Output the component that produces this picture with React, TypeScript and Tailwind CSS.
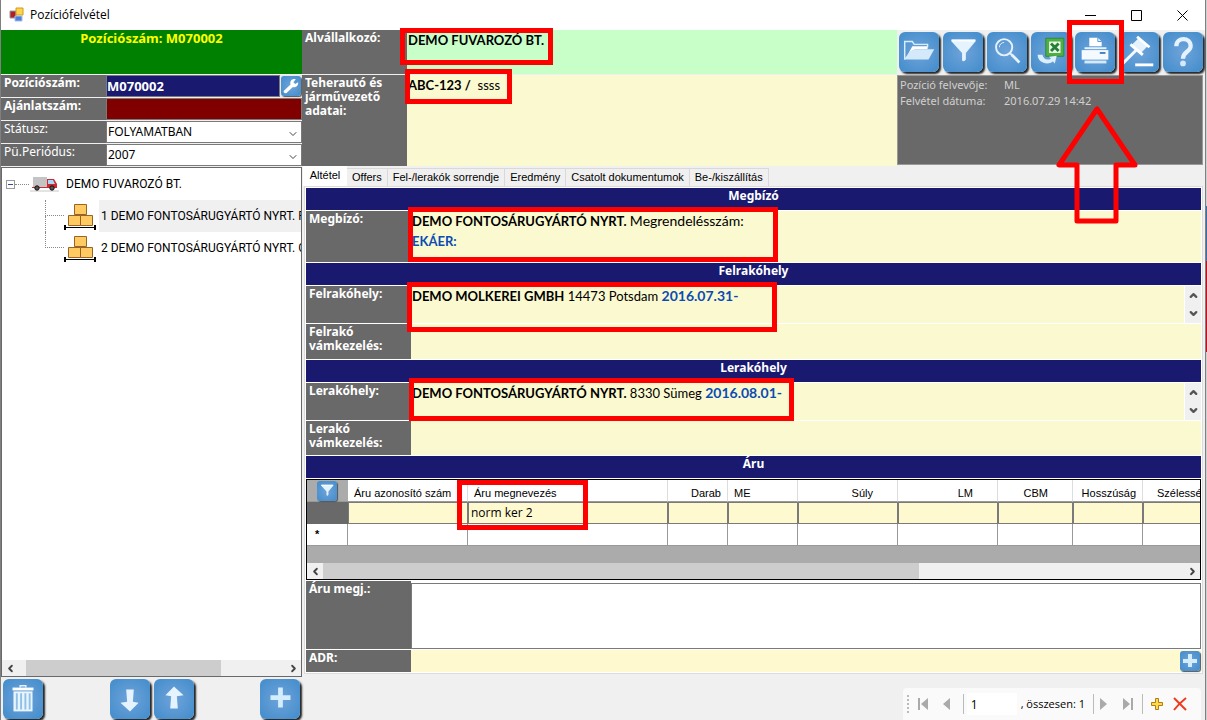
import React from "react";
import clsx from "clsx";
import { ChevronDown, ChevronLeft, ChevronRight, ChevronUp } from "lucide-react";

const tabs = ["Offers", "Fel-/lerakók sorrendje", "Eredmény", "Csatolt dokumentumok", "Be-/kiszállítás"];

const columns = [
  { label: "Áru azonosító szám", width: "w-[120px]", align: "text-left pl-1.5" },
  { label: "Áru megnevezés", width: "w-[200px]", align: "text-left pl-1.5" },
  { label: "Darab", width: "w-[60px]", align: "text-right pr-1.5" },
  { label: "ME", width: "w-[70px]", align: "text-left pl-1.5" },
  { label: "Súly", width: "w-[100px]", align: "text-right pr-6" },
  { label: "LM", width: "w-[100px]", align: "text-right pr-6" },
  { label: "CBM", width: "w-[75px]", align: "text-right pr-6" },
  { label: "Hosszúság", width: "w-[70px]", align: "text-right pr-1.5" },
  { label: "Szélessé", width: "", align: "text-left pl-3.5" },
];

const treeItems = ["1 DEMO FONTOSÁRUGYÁRTÓ NYRT. F", "2 DEMO FONTOSÁRUGYÁRTÓ NYRT. G"];

type IconProps = { className?: string };

const FolderIcon = ({ className }: IconProps) => (
  <svg viewBox="0 0 42 42" className={className}>
    <path d="M6 29V10h8l2 3h14v3" fill="none" stroke="#d9edfb" strokeWidth="1.5" />
    <path d="M8 26 14 15h16v3H17l-4 2z" fill="#fff" />
    <path d="M5 29 12 20l5-2h20l-6 11z" fill="#d4e9f9" />
  </svg>
);

const FunnelIcon = ({ className }: IconProps) => (
  <svg viewBox="0 0 42 42" className={className}>
    <path d="M9 8h25v2L24 22v7q-2 3-4 1v-8L9 10z" fill="#e4f3fd" />
    <path d="M9 8h25v2H9z" fill="#fff" />
  </svg>
);

const SearchIcon = ({ className }: IconProps) => (
  <svg viewBox="0 0 42 42" className={className} fill="none" stroke="#e4f3fd">
    <circle cx="18" cy="16" r="8.5" strokeWidth="2" />
    <path d="M13 16a5 5 0 0 1 5-5" strokeWidth="1" />
    <path d="m24 22 3 3" strokeWidth="2" />
    <path d="m26 24 8 8" strokeWidth="3" />
  </svg>
);

const ExcelIcon = ({ className }: IconProps) => (
  <svg viewBox="0 0 42 42" className={className}>
    <path d="M15.500 6.500h19v19h-19z" fill="#4fae45" stroke="#2c8a35" />
    <path d="M19 10h12v12H19z" fill="#eef6e4" />
    <path d="m21 12 8 8m0-8-8 8" stroke="#23803a" strokeWidth="3" />
    <path d="M7 24c0 9 11 11 16 7l2 2 2-8-8 1 2 2c-4 2-8 1-9-4z" fill="#dceffc" />
  </svg>
);

const PrinterIcon = ({ className }: IconProps) => (
  <svg viewBox="0 0 42 42" className={className}>
    <path d="M15 6h9l4 4v5H15z" fill="#fff" />
    <path d="M24 6v4h4" fill="none" stroke="#4a90cf" />
    <path d="M10 16h23v2H10z" fill="#e4f3fd" />
    <path d="M7 19h28v10H7z" fill="#f4faff" />
    <path d="M26 21h6v2h-6z" fill="#3f81c4" />
    <path d="M10 30h23v3H10z" fill="#d4e9f9" />
  </svg>
);

const GavelIcon = ({ className }: IconProps) => (
  <svg viewBox="0 0 42 42" className={className}>
    <path d="M19 18 3 34" stroke="#f4faff" strokeWidth="3" />
    <path d="m20 7 10 8-7 7-10-8z" fill="#e4f3fd" />
    <path d="m19 5 13 11M12 13l13 11" stroke="#fff" strokeWidth="3" />
    <path d="M17 33h19v3H17z" fill="#fff" />
  </svg>
);

const HelpIcon = ({ className }: IconProps) => (
  <svg viewBox="0 0 42 42" className={className}>
    <path d="M14 15c0-10 15-10 15 0 0 6-8 5-8 13" fill="none" stroke="#e4f3fd" strokeWidth="4.5" />
    <circle cx="21" cy="33" r="3" fill="#d4e9f9" />
  </svg>
);

const TrashIcon = ({ className }: IconProps) => (
  <svg viewBox="0 0 42 42" className={className}>
    <path d="M18 9V7h6v2" fill="none" stroke="#e4f3fd" strokeWidth="1.5" />
    <path d="M10 9h22v3H10z" fill="#fff" />
    <path d="M11 13h20v21H11z" fill="#e9f5fe" />
    <path d="M14.500 15v17M19 15v17M23.500 15v17M28 15v17" stroke="#8fc0e8" strokeWidth="2" />
  </svg>
);

const ArrowIcon = ({ className }: IconProps) => (
  <svg viewBox="0 0 42 42" className={className}>
    <path d="M17 31h8l-1-13 7-1-10-9-9 9 6 1z" fill="#e4f3fd" />
  </svg>
);

const PlusIcon = ({ className }: IconProps) => (
  <svg viewBox="0 0 42 42" className={className}>
    <path d="M19 9h5v8h8v5h-8v8h-5v-8h-8v-5h8z" fill="#d4edfc" />
  </svg>
);

const SmallPlusIcon = ({ className }: IconProps) => (
  <svg viewBox="0 0 20 20" className={className}>
    <path d="M8 3h4v5h5v4h-5v4H8v-4H3V8h5z" fill="#d4edfc" />
  </svg>
);

const WrenchIcon = ({ className }: IconProps) => (
  <svg viewBox="0 0 42 42" className={className}>
    <path d="m6 31 14-13c-2-8 4-13 11-11l-5 6 4 4 6-4c1 7-5 12-11 10L11 36c-3 1-7-2-5-5z" fill="#fff" />
  </svg>
);

const TruckIcon = ({ className }: IconProps) => (
  <svg viewBox="0 0 30 16" className={className}>
    <path d="M0 15h29" stroke="#c8c8c8" />
    <path d="M3 1h14v10H3z" fill="#c4c4c4" />
    <path d="M17 3h7l3 5v4H2v-1h15z" fill="#cf2a33" />
    <path d="M18 4h5l2 4h-7z" fill="#a9d8f2" />
    <circle cx="7" cy="12" r="2.2" fill="#555" stroke="#111" />
    <circle cx="22" cy="12" r="2.2" fill="#555" stroke="#111" />
  </svg>
);

const BoxesIcon = ({ className }: IconProps) => (
  <svg viewBox="0 0 32 27" className={className}>
    <path
      d="M10.500 1.500h12v10h-12zM4.500 12.500h12v10h-12zM16.500 12.500h12v10h-12z"
      fill="#fdcb62"
      stroke="#9a6326"
    />
    <path d="M0 22h2v2h28v-2h2v5h-2v-2H2v2H0z" fill="#000" />
  </svg>
);

const toolbar = [
  { label: "Megnyitás", icon: FolderIcon },
  { label: "Szűrés", icon: FunnelIcon },
  { label: "Keresés", icon: SearchIcon },
  { label: "Excel export", icon: ExcelIcon },
  { label: "Nyomtatás", icon: PrinterIcon },
  { label: "Lezárás", icon: GavelIcon },
  { label: "Súgó", icon: HelpIcon },
];

type IconButtonProps = { label: string; icon: React.FC<IconProps>; small?: boolean; flip?: boolean };

const IconButton = ({ label, icon: Icon, small, flip }: IconButtonProps) => (
  <button
    aria-label={label}
    className={clsx(
      "shrink-0 bg-radial from-[#6fa3da] to-[#3f8ccb]",
      small
        ? "size-5 rounded-[3px] shadow-[1px_1px_1px_#555]"
        : "size-10 rounded-md shadow-[2px_2px_2px_#222]"
    )}
  >
    <Icon className={clsx("size-full", flip && "rotate-180")} />
  </button>
);

const SectionTitle = ({ children }: { children: React.ReactNode }) => (
  <h2 className="mb-px h-[22px] bg-[#191970] text-center text-[12px] leading-4 font-bold text-white">{children}</h2>
);

type FieldProps = { label: string; height: string; scroll?: boolean; children?: React.ReactNode };

const Field = ({ label, height, scroll, children }: FieldProps) => (
  <div className={clsx("mb-px flex", height)}>
    <div className="w-[105px] shrink-0 bg-[#696969] px-[3px] pt-px text-[12px] leading-[14px] font-bold text-white">
      {label}
    </div>
    <div className="flex-1 bg-[#fbf9cf] px-px font-['Lato',sans-serif] text-[13px] leading-5">{children}</div>
    {scroll && (
      <div className="ml-px flex w-4 flex-col items-center justify-between bg-[#f0f0f0] py-1 text-[#555]">
        <button aria-label="Fel"><ChevronUp size={11} strokeWidth={5} /></button>
        <button aria-label="Le"><ChevronDown size={11} strokeWidth={5} /></button>
      </div>
    )}
  </div>
);

type SelectRowProps = { id: string; label: string; value: string };

const SelectRow = ({ id, label, value }: SelectRowProps) => (
  <div className="mb-px flex h-[22px]">
    <label htmlFor={id} className="w-[105px] bg-[#696969] pl-[3px] text-[12px] leading-4 text-white">
      {label}
    </label>
    <div className="relative flex-1 border border-[#7a7a7a] bg-white">
      <select id={id} className="block h-full w-full appearance-none pl-px text-[12px] leading-5">
        <option>{value}</option>
      </select>
      <ChevronDown size={12} strokeWidth={2} className="pointer-events-none absolute top-1.5 right-0.5 text-[#444]" />
    </div>
  </div>
);

const HScroll = ({ thumb }: { thumb: string }) => (
  <div className="flex h-4 items-center bg-[#f0f0f0] text-[#444]">
    <button aria-label="Balra" className="flex w-4 justify-center"><ChevronLeft size={11} strokeWidth={4} /></button>
    <div className="h-full flex-1"><div className={clsx("h-full bg-[#cdcdcd]", thumb)} /></div>
    <button aria-label="Jobbra" className="flex w-4 justify-center"><ChevronRight size={11} strokeWidth={4} /></button>
  </div>
);

const Highlight = ({ className }: { className: string }) => (
  <div className={clsx("pointer-events-none absolute border-5 border-[#f00]", className)} />
);

const TitleBar = () => (
  <header className="flex h-[30px] items-center bg-white pl-2">
    <svg viewBox="0 0 16 16" className="mr-[5px] size-4">
      <path d="M1 4h6v7H1z" fill="#b32020" stroke="#8d9bb0" />
      <path d="M7 1h7v7H7z" fill="#ffd34d" stroke="#d39a17" />
      <path d="M6 9h7v5H6z" fill="#4f7fd9" stroke="#a8bee8" />
    </svg>
    <h1 className="flex-1 font-['Open_Sans',sans-serif] text-[12px]">Pozíciófelvétel</h1>
    <div className="flex items-center gap-[35px] pr-[17px]">
      <button aria-label="Kis méret"><svg viewBox="0 0 11 11" className="size-[11px]"><path d="M0 5.500h11" stroke="#000" /></svg></button>
      <button aria-label="Teljes méret"><svg viewBox="0 0 11 11" className="size-[11px]"><path d="M.5.5h10v10H.5z" fill="none" stroke="#000" /></svg></button>
      <button aria-label="Bezárás"><svg viewBox="0 0 11 11" className="size-[11px]"><path d="m.5.5 10 10m0-10-10 10" stroke="#000" /></svg></button>
    </div>
  </header>
);

const LeftPanel = () => (
  <aside className="flex w-[301px] shrink-0 flex-col">
    <div className="mb-px h-11 bg-[#008000] text-center text-[13px] leading-4 font-bold text-[#ff0]">
      Pozíciószám: M070002
    </div>
    <div className="mb-px flex h-[22px] bg-[#696969]">
      <label htmlFor="position" className="w-[105px] pl-[3px] text-[12px] leading-4 font-bold text-white">Pozíciószám:</label>
      <input
        id="position"
        readOnly
        value="M070002"
        className="min-w-0 flex-1 border border-[#7a7a7a] bg-[#191970] text-[13px] leading-5 font-bold text-white"
      />
      <div className="bg-[#e8e8e8] p-px"><IconButton label="Beállítás" icon={WrenchIcon} small /></div>
    </div>
    <div className="mb-px flex h-[22px] bg-[#696969]">
      <label htmlFor="offer" className="w-[105px] pl-[3px] text-[12px] leading-4 font-bold text-white">Ajánlatszám:</label>
      <input id="offer" readOnly className="min-w-0 flex-1 border border-[#7a7a7a] bg-[#800000] text-white" />
    </div>
    <SelectRow id="status" label="Státusz:" value="FOLYAMATBAN" />
    <SelectRow id="period" label="Pü.Periódus:" value="2007" />
    <div className="flex flex-1 flex-col border border-[#696969] bg-white font-['Roboto',sans-serif] text-[12px]">
      <ul className="flex-1 overflow-hidden">
        <li>
          <div className="flex h-8 items-center pl-1">
            <button aria-label="Összecsukás" className="flex size-[9px] items-center justify-center border border-[#999]">
              <span className="h-px w-[5px] bg-[#2b4ba0]" />
            </button>
            <span className="w-[14px] border-t border-dotted border-[#888]" />
            <TruckIcon className="mx-px h-4 w-[30px]" />
            <span className="ml-[5px]">DEMO FUVAROZÓ BT.</span>
          </div>
          <ul className="pl-[43px]">
            {treeItems.map((item, i) => (
              <li key={item} className="flex h-8 items-center">
                <span className="h-full w-[19px] shrink-0">
                  <span className="block h-4 border-b border-l border-dotted border-[#888]" />
                  {i === 0 && <span className="block h-4 border-l border-dotted border-[#888]" />}
                </span>
                <BoxesIcon className="h-[27px] w-8 shrink-0" />
                <span className={clsx("ml-[3px] h-8 flex-1 pl-0.5 leading-8 whitespace-nowrap", i === 0 && "bg-[#f0f0f0]")}>
                  {item}
                </span>
              </li>
            ))}
          </ul>
        </li>
      </ul>
      <HScroll thumb="ml-2 w-[195px]" />
    </div>
    <div className="flex h-[43px] gap-1 pt-0.5 pl-0.5">
      <IconButton label="Törlés" icon={TrashIcon} />
      <div className="flex flex-1 justify-center gap-1">
        <IconButton label="Le" icon={ArrowIcon} flip />
        <IconButton label="Fel" icon={ArrowIcon} />
      </div>
      <div className="pr-0.5"><IconButton label="Hozzáadás" icon={PlusIcon} /></div>
    </div>
  </aside>
);

const TopPanel = () => (
  <div className="flex">
    <div className="w-[595px]">
      <div className="mb-px flex h-11">
        <div className="w-[105px] bg-[#696969] pl-[3px] text-[12px] leading-4 font-bold text-white">Alvállalkozó:</div>
        <div className="flex-1 bg-[#c8ffc8] px-px font-['Lato',sans-serif] text-[13px] leading-5 font-bold">DEMO FUVAROZÓ BT.</div>
      </div>
      <div className="flex h-[91px]">
        <div className="w-[105px] bg-[#696969] px-[3px] pt-px text-[12px] leading-[14px] font-bold text-white">
          Teherautó és járművezető adatai:
        </div>
        <div className="flex-1 bg-[#fbf9cf] px-px font-['Lato',sans-serif] text-[13px] leading-5">
          <b>ABC-123 /</b>&nbsp; ssss
        </div>
      </div>
    </div>
    <div className="flex flex-1 flex-col">
      <div className="flex h-[45px] gap-1 pt-0.5 pl-0.5">
        {toolbar.map((item) => (
          <IconButton key={item.label} label={item.label} icon={item.icon} />
        ))}
      </div>
      <dl className="mr-0.5 mb-px grid flex-1 grid-cols-[104px_1fr] content-start border border-[#999] bg-[#696969] pt-px pl-0.5 text-[11px] leading-4 text-[#d0d0d0]">
        <dt>Pozíció felvevője:</dt>
        <dd>ML</dd>
        <dt>Felvétel dátuma:</dt>
        <dd>2016.07.29 14:42</dd>
      </dl>
    </div>
  </div>
);

const GoodsGrid = () => (
  <div className="mb-px overflow-hidden border border-black bg-[#ababab]">
    <table className="w-full table-fixed border-separate border-spacing-0 font-['Liberation_Sans',sans-serif] text-[11px]">
      <thead>
        <tr className="h-[22px]">
          <th className="w-[41px] border-b border-[#999] bg-[#ababab] p-0">
            <div className="flex justify-center pr-px"><IconButton label="Szűrés" icon={FunnelIcon} small /></div>
          </th>
          {columns.map((col) => (
            <th
              key={col.label}
              className={clsx(
                "border-r border-b border-r-[#ddd] border-b-[#999] bg-white pt-1 pb-0 leading-4 font-normal whitespace-nowrap last:border-r-0",
                col.width,
                col.align
              )}
            >
              {col.label}
            </th>
          ))}
        </tr>
      </thead>
      <tbody>
        <tr className="h-[22px]">
          <td className="bg-[#696969] p-0" />
          {columns.map((col, i) => (
            <td
              key={col.label}
              className="border border-[#7a7a7a] bg-[#fff9cf] px-0.5 py-0 font-['Open_Sans',sans-serif] text-[12px] leading-5 last:border-r-0"
            >
              {i === 1 && "norm ker 2"}
            </td>
          ))}
        </tr>
        <tr className="h-[22px]">
          <td className="border-r border-b border-[#999] bg-white px-2 py-0 font-bold">*</td>
          {columns.map((col) => (
            <td key={col.label} className="border-r border-b border-[#999] bg-white p-0 last:border-r-0" />
          ))}
        </tr>
      </tbody>
    </table>
    <div className="h-[17px]" />
    <HScroll thumb="w-[596px] max-w-full" />
  </div>
);

const Pager = () => (
  <nav className="mr-1 flex h-8 items-center rounded-t bg-[#fafafa] pl-1 font-['Open_Sans',sans-serif] text-[12px] text-[#aaa]">
    <span className="mr-2 h-[18px] border-l-2 border-dotted border-[#bbb]" />
    <button aria-label="Első" className="mr-3"><svg viewBox="0 0 12 12" className="size-3"><path d="M1 0h2v12H1zM11 0v12L4 6z" fill="currentColor" /></svg></button>
    <button aria-label="Előző" className="mr-2.5"><svg viewBox="0 0 12 12" className="size-3"><path d="M9 0v12L2 6z" fill="currentColor" /></svg></button>
    <span className="mr-[3px] h-5 w-px bg-[#bbb]" />
    <input aria-label="Oldal" defaultValue="1" className="h-[22px] w-[50px] bg-white px-1 text-[12px] text-black" />
    <span className="mr-2 ml-1 text-[11px] text-black">, összesen: 1</span>
    <span className="mr-1 h-5 w-px bg-[#bbb]" />
    <button aria-label="Következő" className="mr-3"><svg viewBox="0 0 12 12" className="size-3"><path d="M2 0v12l7-6z" fill="currentColor" /></svg></button>
    <button aria-label="Utolsó" className="mr-2"><svg viewBox="0 0 12 12" className="size-3"><path d="M1 0v12l7-6zM9 0h2v12H9z" fill="currentColor" /></svg></button>
    <span className="mr-2 h-5 w-px bg-[#bbb]" />
    <button aria-label="Új" className="mr-2.5"><svg viewBox="0 0 12 12" className="size-3"><path d="M4.500.5h3v4h4v3h-4v4h-3v-4h-4v-3h4z" fill="#ffd84d" stroke="#b07f10" /></svg></button>
    <button aria-label="Törlés" className="mr-3.5"><svg viewBox="0 0 14 14" className="size-3.5"><path d="m1 1 12 12M13 1C8 5 4 9 1 13" stroke="#f03c1e" strokeWidth="2" /></svg></button>
  </nav>
);

const MainPanel = () => (
  <main className="flex min-w-0 flex-1 flex-col">
    <TopPanel />
    <div role="tablist" className="ml-px flex h-5 items-end font-['Liberation_Sans',sans-serif] text-[11px]">
      <button role="tab" aria-selected="true" className="h-5 w-11 bg-white pb-0.5 text-center">Altétel</button>
      {tabs.map((tab) => (
        <button key={tab} role="tab" aria-selected="false" className="h-[18px] border-t border-r border-[#d9d9d9] px-[5px]">
          {tab}
        </button>
      ))}
    </div>
    <section className="mr-0.5 ml-0.5 flex flex-col border border-[#dcdcdc] bg-white p-px">
      <SectionTitle>Megbízó</SectionTitle>
      <Field label="Megbízó:" height="h-[51px]">
        <b>DEMO FONTOSÁRUGYÁRTÓ NYRT.</b> <span className="text-[14px]">Megrendelésszám:</span>
        <br />
        <b className="text-[#0a4bb5]">EKÁER:</b>
      </Field>
      <SectionTitle>Felrakóhely</SectionTitle>
      <Field label="Felrakóhely:" height="h-[37px]" scroll>
        <b>DEMO MOLKEREI GMBH</b> 14473 Potsdam <b className="text-[14px] text-[#0a4bb5]">2016.07.31-</b>
      </Field>
      <Field label="Felrakó vámkezelés:" height="h-[35px]" />
      <SectionTitle>Lerakóhely</SectionTitle>
      <Field label="Lerakóhely:" height="h-[37px]" scroll>
        <b>DEMO FONTOSÁRUGYÁRTÓ NYRT.</b> 8330 Sümeg <b className="text-[14px] text-[#0a4bb5]">2016.08.01-</b>
      </Field>
      <Field label="Lerakó vámkezelés:" height="h-[34px]" />
      <SectionTitle>Áru</SectionTitle>
      <GoodsGrid />
      <div className="mb-px flex h-[68px]">
        <label htmlFor="note" className="w-[105px] bg-[#696969] pl-[3px] text-[12px] leading-4 font-bold text-white">Áru megj.:</label>
        <textarea id="note" className="mt-0.5 flex-1 resize-none border border-[#7a7a7a] bg-white" />
      </div>
      <div className="flex h-[22px] bg-[#fff9cf]">
        <div className="w-[105px] bg-[#696969] pl-[3px] text-[12px] leading-4 font-bold text-white">ADR:</div>
        <div className="flex flex-1 justify-end p-px"><IconButton label="ADR hozzáadása" icon={SmallPlusIcon} small /></div>
      </div>
    </section>
    <div className="mt-auto flex justify-end"><Pager /></div>
  </main>
);

const App: React.FC = () => (
  <div className="relative flex min-h-screen overflow-hidden bg-[#f0f0f0] font-['Noto_Sans',sans-serif] text-black">
    <div className="flex min-w-0 flex-1 flex-col border-r border-l border-[#808080]">
      <TitleBar />
      <div className="flex flex-1">
        <LeftPanel />
        <MainPanel />
      </div>
    </div>
    {/* sliver of the window behind */}
    <div className="w-px bg-[#d0d0d0] pt-[206px]">
      <div className="h-[55px] bg-[#3a6ea5]" />
      <div className="h-[91px] bg-[#c01020]" />
    </div>

    <Highlight className="top-7 left-[400px] h-[37px] w-[153px]" />
    <Highlight className="top-[69px] left-[405px] h-[35px] w-[107px]" />
    <Highlight className="top-[207px] left-[408px] h-[55px] w-[370px]" />
    <Highlight className="top-[282px] left-[407px] h-[50px] w-[370px]" />
    <Highlight className="top-[378px] left-[409px] h-[43px] w-[385px]" />
    <Highlight className="top-[480px] left-[457px] h-[50px] w-[131px]" />
    <Highlight className="top-5 left-[1067px] h-16 w-[57px]" />
    <svg viewBox="0 0 84 120" className="pointer-events-none absolute top-[105px] left-[1056px] h-[120px] w-[84px]">
      <path d="M41 4 3 60h18v56h39V60h19z" fill="none" stroke="#f00" strokeWidth="5" strokeLinejoin="round" />
    </svg>
  </div>
);

export default App;
